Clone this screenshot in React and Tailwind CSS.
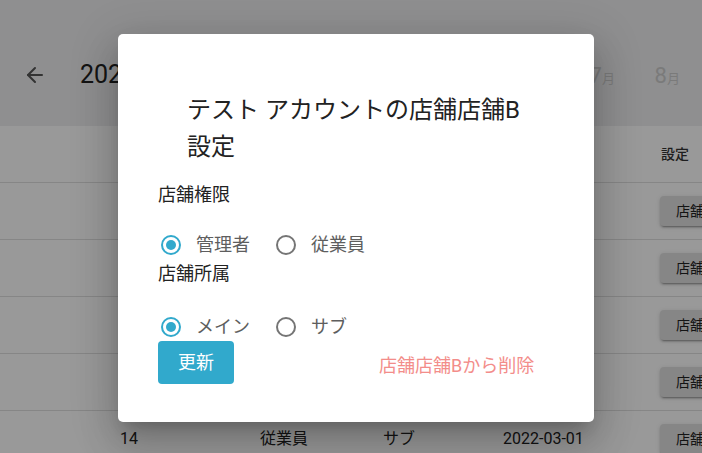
import { ArrowLeft } from 'lucide-react';

const ROWS = [
  { id: 10, role: '管理者', belong: 'メイン', date: '2022-01-01' },
  { id: 11, role: '従業員', belong: 'サブ', date: '2022-01-15' },
  { id: 12, role: '従業員', belong: 'メイン', date: '2022-02-01' },
  { id: 13, role: '管理者', belong: 'サブ', date: '2022-02-15' },
  { id: 14, role: '従業員', belong: 'サブ', date: '2022-03-01' },
];

const MONTHS = [3, 4, 5, 6, 7, 8];

function Radio({ checked }) {
  const color = checked ? '#31a9cc' : '#757575';
  return (
    <svg width="24" height="24" viewBox="0 0 24 24" className="shrink-0">
      <circle cx="12" cy="12" r="9" fill="none" stroke={color} strokeWidth="2" />
      {checked && <circle cx="12" cy="12" r="5" fill={color} />}
    </svg>
  );
}

function RadioRow({ options, selected }) {
  return (
    <div className="flex items-center h-[28px] pl-px">
      {options.map((o, i) => (
        <div key={o} className={`flex items-center ${i > 0 ? 'ml-[24px]' : ''}`}>
          <Radio checked={o === selected} />
          <span className="ml-[13px] text-[18px] leading-none text-[#5e5e5e]">{o}</span>
        </div>
      ))}
    </div>
  );
}

export default function App() {
  return (
    <div className="relative h-[453px] w-[702px] overflow-hidden bg-white font-['Roboto','Noto_Sans_CJK_JP',sans-serif]">
      {/* page header */}
      <header className="h-[126px] bg-[#eeeff0] pt-[50px]">
        <div className="flex items-center h-[50px]">
          <ArrowLeft className="ml-[23px] text-[#555]" size={24} strokeWidth={2} />
          <span className="ml-[33px] text-[25px] text-[#222]">2022年3月</span>
          <div className="ml-auto mr-[22px] flex">
            {MONTHS.map(m => (
              <div key={m} className="w-[65px] flex justify-end items-baseline text-[#cccccc]">
                <span className="text-[22px]">{m}</span>
                <span className="text-[13px]">月</span>
              </div>
            ))}
          </div>
        </div>
      </header>

      {/* table */}
      <div className="text-[#222]">
        <div className="h-[57px] border-b border-[#e0e0e0] pl-[120px] grid grid-cols-[140px_123px_120px_157px_auto] items-center text-[14px] font-medium text-[#333]">
          <span>ID</span>
          <span>権限</span>
          <span>所属</span>
          <span>開始日</span>
          <span className="pl-px">設定</span>
        </div>
        {ROWS.map(r => (
          <div key={r.id} className="h-[57px] border-b border-[#e0e0e0] pl-[120px] grid grid-cols-[140px_123px_120px_157px_auto] items-center text-[16px]">
            <span>{r.id}</span>
            <span>{r.role}</span>
            <span>{r.belong}</span>
            <span>{r.date}</span>
            <button className="h-[30px] w-[90px] px-[16px] rounded bg-[#e0e0e0] text-[14px] text-[#222] whitespace-nowrap text-left shadow-[0_3px_1px_-2px_rgba(0,0,0,0.2),0_2px_2px_0_rgba(0,0,0,0.14),0_1px_5px_0_rgba(0,0,0,0.12)]">
              店舗設定
            </button>
          </div>
        ))}
      </div>

      {/* dialog */}
      <div className="absolute inset-0 bg-black/40" />
      <div className="absolute left-[118px] top-[34px] w-[476px] h-[388px] bg-white rounded-[5px] shadow-[0_11px_15px_-7px_rgba(0,0,0,0.2),0_24px_38px_3px_rgba(0,0,0,0.14),0_9px_46px_8px_rgba(0,0,0,0.12)]">
        <h2 className="pt-[58px] pl-[69px] w-[414px] text-[24px] leading-[37px] text-[#222]">
          テスト アカウントの店舗店舗B設定
        </h2>
        <div className="pl-[40px]">
          <p className="mt-[20px] text-[18px] leading-[18px] text-[#222]">店舗権限</p>
          <div className="mt-[27px]">
            <RadioRow options={['管理者', '従業員']} selected="管理者" />
          </div>
          <p className="mt-[6px] text-[18px] leading-[18px] text-[#222]">店舗所属</p>
          <div className="mt-[30px]">
            <RadioRow options={['メイン', 'サブ']} selected="メイン" />
          </div>
          <div className="flex items-center">
            <button className="w-[76px] h-[43px] rounded-[4px] bg-[#31a9cc] text-white text-[18px]">更新</button>
            <span className="ml-[145px] mt-[5px] text-[18px] text-[#f38d8a]">店舗店舗Bから削除</span>
          </div>
        </div>
      </div>
    </div>
  );
}
